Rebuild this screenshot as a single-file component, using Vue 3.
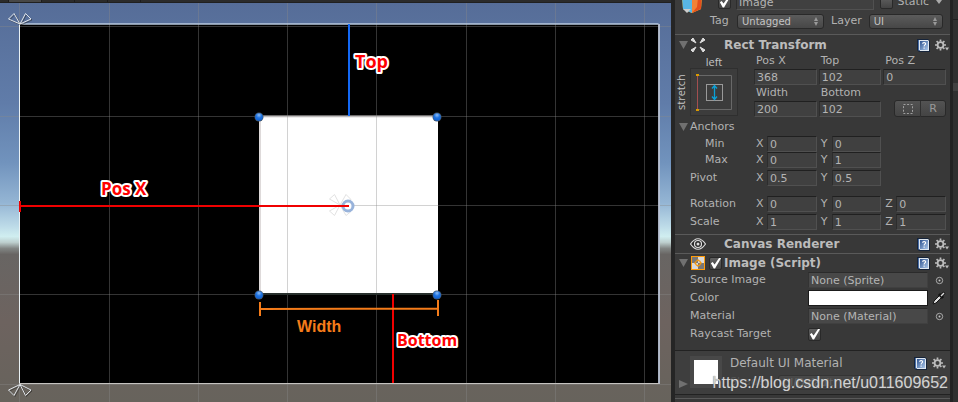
<script setup>
import { ref } from 'vue'

const name = ref('Image')
const active = ref(true)
const isStatic = ref(false)
const imageEnabled = ref(true)
const raycast = ref(true)

const verticals = [19, 109, 198, 287, 376, 466, 555, 644]
const horizontals = [26, 116, 205, 294, 384]
const handles = [[259, 117], [437, 117], [259, 295], [437, 295]]

const rectFields = [
  ['Pos X', '368'], ['Top', '102'], ['Pos Z', '0'],
  ['Width', '200'], ['Bottom', '102']
]
const vectors = [
  { label: 'Min', kind: 'nested', values: { X: '0', Y: '0' } },
  { label: 'Max', kind: 'nested', values: { X: '0', Y: '1' } },
  { label: 'Pivot', kind: 'pivot', values: { X: '0.5', Y: '0.5' } },
  { label: 'Rotation', kind: '', values: { X: '0', Y: '0', Z: '0' } },
  { label: 'Scale', kind: '', values: { X: '1', Y: '1', Z: '1' } }
]
</script>

<template>
  <svg class="symbols" aria-hidden="true">
    <defs>
      <linearGradient id="book" x1="0" y1="0" x2="1" y2="1">
        <stop offset="0" stop-color="#2f5490" /><stop offset="1" stop-color="#a9c6ea" />
      </linearGradient>
      <symbol id="help" viewBox="0 0 13 13">
        <path d="M0 0H11L13 2V13H2L0 11Z" fill="#16243a" />
        <path d="M2 1H11L12 2V12H3L2 11Z" fill="#dfe7ef" />
        <path d="M1 1H2V11L3 12H2L1 11Z" fill="#4a6fa8" />
        <path d="M3 2H11V11H3Z" fill="url(#book)" />
        <path d="M5.500 4.800C5.700 3.200 8.700 3.200 8.600 4.900C8.500 6 7.100 6 7.100 7.500M7.100 8.500V9.700" fill="none" stroke="#fff" stroke-width="1.100" />
      </symbol>
      <symbol id="gear" viewBox="0 0 14 12">
        <circle cx="5.5" cy="5.5" r="2.9" fill="none" stroke="#bdbdbd" stroke-width="1.8" />
        <path d="M5.5 0V2M5.5 9V11M0 5.5H2M9 5.5H11M1.6 1.6L3 3M8 8L9.4 9.4M9.4 1.6L8 3M1.6 9.4L3 8" stroke="#bdbdbd" stroke-width="1.7" />
        <path d="M10 8H14L12 11Z" fill="#bdbdbd" />
      </symbol>
      <symbol id="picker" viewBox="0 0 9 9">
        <circle cx="4.5" cy="4.5" r="3.2" fill="none" stroke="#aaa" /><circle cx="4.5" cy="4.5" r="1" fill="#c4c4c4" />
      </symbol>
    </defs>
  </svg>

  <main class="editor">
    <section class="scene" aria-label="Scene">
      <div class="tabs"><span></span><span class="lit"></span><span></span><span></span><span></span><span></span></div>
      <svg class="view" viewBox="0 3 671 399" preserveAspectRatio="xMinYMin slice">
        <defs>
          <linearGradient id="sky" gradientUnits="userSpaceOnUse" x1="0" y1="3" x2="0" y2="402">
            <stop offset="0" stop-color="#566d98" />
            <stop offset=".25" stop-color="#607ca9" />
            <stop offset=".4" stop-color="#7193bd" />
            <stop offset=".5" stop-color="#94b5d4" />
            <stop offset=".56" stop-color="#bddbe8" />
            <stop offset=".585" stop-color="#d0eef0" />
            <stop offset=".6" stop-color="#bdcfce" />
            <stop offset=".615" stop-color="#828684" />
            <stop offset=".63" stop-color="#686563" />
            <stop offset=".8" stop-color="#6d635f" />
            <stop offset="1" stop-color="#67635c" />
          </linearGradient>
          <radialGradient id="dot" cx=".5" cy=".25" r=".75">
            <stop offset="0" stop-color="#8dbcf5" /><stop offset=".5" stop-color="#1f73e0" /><stop offset="1" stop-color="#0e5fd2" />
          </radialGradient>
        </defs>
        <rect y="3" width="671" height="399" fill="url(#sky)" />
        <rect x="20" y="24" width="639" height="360" fill="#000" />
        <rect x="259" y="116" width="179" height="178" fill="#fff" />
        <path d="M260 116V294M259 116.5H438" stroke="#dedada" stroke-width="2" />
        <g stroke="#888" stroke-opacity=".38">
          <path v-for="x in verticals" :key="x" :d="`M${x + .5} 3V402`" />
          <path v-for="y in horizontals" :key="y" :d="`M0 ${y + .5}H671`" />
        </g>
        <path d="M19.5 24V384" stroke="#e9f1f4" />
        <path d="M19 24H658.5" stroke="#b8cadf" stroke-width="1.6" />
        <path d="M659 24V384" stroke="#bcc5d6" stroke-width="1.8" />
        <path d="M19 383.5H659" stroke="#c5c3c0" />
        <g fill="none" stroke="#222" stroke-opacity=".5" transform="translate(1 1)">
          <path d="M20 24L8.500 19L14 13.500ZM20 24L25.500 13.500L31 19Z" />
          <path d="M20 384.500L8.500 390L14 395.500ZM20 384.500L25.500 395.500L31 390Z" />
        </g>
        <g fill="none" stroke="#e0e4e8">
          <path d="M20 24L8.500 19L14 13.500ZM20 24L25.500 13.500L31 19Z" />
          <path d="M20 384.500L8.500 390L14 395.500ZM20 384.500L25.500 395.500L31 390Z" />
        </g>
        <path d="M340 205L329.500 199L334.500 194.500ZM340 205L346 194.500L351 199.500ZM340 205L329.500 211L334.500 215.500ZM340 205L346 215.500L351 211.500Z" fill="none" stroke="#e2e2e2" />
        <circle cx="348" cy="206" r="5" fill="#fff" stroke="#98b3db" stroke-width="3" />
        <path d="M259 294H438" stroke="#28302d" stroke-width="2" />
        <path d="M349 24V116" stroke="#1469f5" stroke-width="2" />
        <path d="M20 206H349M20 201V212M393 294V383" stroke="#f00000" stroke-width="2" />
        <path d="M260 309L438 308.500M260 302V316M438 300V316" stroke="#f57c1a" stroke-width="2" />
        <g v-for="([x, y]) in handles" :key="`${x}-${y}`">
          <circle :cx="x" :cy="y" r="4.500" fill="#456" />
          <circle :cx="x" :cy="y" r="3.800" fill="url(#dot)" />
        </g>
        <g class="notes">
          <text x="355" y="68" font-size="18">Top</text>
          <text x="101" y="195" font-size="17">Pos X</text>
          <text x="397" y="346" font-size="16">Bottom</text>
          <text class="size" x="297" y="332" font-size="16">Width</text>
        </g>
      </svg>
    </section>

    <aside class="inspector" aria-label="Inspector">
      <header class="object">
        <div class="identity">
          <svg class="cube" viewBox="0 0 22 22" aria-hidden="true">
            <path d="M1 5L11 1L21 5L20 18L11 22L2 18Z" fill="#f2d53c" />
            <path d="M1 5L11 9V22L2 18Z" fill="#58b6e5" />
            <path d="M11 9L21 5L20 18L11 22Z" fill="#e54f1d" />
            <path d="M11 9L17 7L16 16L11 22Z" fill="#f38236" />
            <path d="M2 18H10L6 22Z" fill="#ccc" />
          </svg>
          <input v-model="active" class="check" type="checkbox" aria-label="Active">
          <input v-model="name" class="field name" aria-label="Name">
          <label class="static"><input v-model="isStatic" class="check" type="checkbox">Static</label>
          <span class="drop"></span>
        </div>
        <div class="tags">
          <label for="tag">Tag</label>
          <span class="select tag"><select id="tag"><option>Untagged</option></select></span>
          <label for="layer">Layer</label>
          <span class="select layer"><select id="layer"><option>UI</option></select></span>
        </div>
      </header>

      <section class="component">
        <div class="title tall">
          <span class="fold"></span>
          <svg class="icon" viewBox="0 0 16 16" aria-hidden="true">
            <path d="M1 3L3 1L6 6ZM15 3L13 1L10 6ZM1 13L3 15L6 10ZM15 13L13 15L10 10Z" fill="#ddd" stroke="#ddd" />
          </svg>
          <h2>Rect Transform</h2>
          <button class="tool" aria-label="Help"><svg><use href="#help" /></svg></button>
          <button class="tool wide" aria-label="Settings"><svg><use href="#gear" /></svg></button>
        </div>
        <div class="rect">
          <div class="anchor">
            <span class="across">left</span>
            <span class="along">stretch</span>
            <button class="preset" aria-label="Anchor presets">
              <svg viewBox="0 0 48 48">
                <path d="M7 7.500H41.500V41.500H7" fill="none" stroke="#686868" />
                <path d="M7.500 7V42" stroke="#a34f50" />
                <rect x="16.500" y="16.500" width="16" height="16" fill="none" stroke="#999" />
                <path d="M24.500 18V31M22 20.500L24.500 17.500L27 20.500M22 28.500L24.500 31.500L27 28.500" fill="none" stroke="#0aa1d8" stroke-width="1.300" />
                <path d="M6 6H9V8H6ZM6 41H9V43H6Z" fill="#d99a00" />
              </svg>
            </button>
          </div>
          <div class="columns">
            <label v-for="[label, value] in rectFields" :key="label" class="stacked">
              <span>{{ label }}</span><input class="field" :value="value">
            </label>
            <div class="modes">
              <button aria-label="Blueprint mode"><svg viewBox="0 0 12 12"><rect x="1.500" y="1.500" width="9" height="9" fill="none" stroke="#a0a0a0" stroke-dasharray="2 1.600" /></svg></button>
              <button>R</button>
            </div>
          </div>
        </div>
        <div class="anchors"><span class="fold"></span>Anchors</div>
        <div v-for="row in vectors" :key="row.label" class="vector" :class="row.kind">
          <span>{{ row.label }}</span>
          <div class="columns">
            <label v-for="(value, axis) in row.values" :key="axis">
              <span>{{ axis }}</span><input class="field" :value="value">
            </label>
          </div>
        </div>
      </section>

      <section class="component">
        <div class="title">
          <span class="fold none"></span>
          <svg class="icon" viewBox="0 0 16 16" aria-hidden="true">
            <path d="M.5 8Q8-2.500 15.500 8Q8 18.500 .5 8Z" fill="#292929" stroke="#ddd" stroke-width="1.200" />
            <circle cx="8" cy="8" r="3.500" fill="none" stroke="#ddd" stroke-width="1.200" /><circle cx="8" cy="8" r="1.500" fill="#ddd" />
          </svg>
          <h2>Canvas Renderer</h2>
          <button class="tool" aria-label="Help"><svg><use href="#help" /></svg></button>
          <button class="tool wide" aria-label="Settings"><svg><use href="#gear" /></svg></button>
        </div>
      </section>

      <section class="component image">
        <div class="title">
          <span class="fold"></span>
          <svg class="icon sprite" viewBox="0 0 14 14" aria-hidden="true">
            <rect width="14" height="14" fill="#777" /><path d="M7 0H14V7H7ZM0 7H7V14H0Z" fill="#d9d9d9" />
            <rect x=".5" y=".5" width="13" height="13" fill="none" stroke="#ff9c0a" />
            <circle cx="7" cy="7" r="2.500" fill="none" stroke="#f29811" stroke-width="1.200" />
            <path d="M3 7H5M9 7H11M7 3V5M7 9V11" stroke="#f29811" />
          </svg>
          <input v-model="imageEnabled" class="check" type="checkbox" aria-label="Image enabled">
          <h2>Image (Script)</h2>
          <button class="tool" aria-label="Help"><svg><use href="#help" /></svg></button>
          <button class="tool wide" aria-label="Settings"><svg><use href="#gear" /></svg></button>
        </div>
        <div class="properties">
          <div class="property">
            <label for="source">Source Image</label><input id="source" class="field object-field" value="None (Sprite)" readonly>
            <button class="pick" aria-label="Select sprite"><svg><use href="#picker" /></svg></button>
          </div>
          <div class="property">
            <label for="color">Color</label><button id="color" class="swatch"></button>
            <button class="pick" aria-label="Pick color">
              <svg class="dropper" viewBox="0 0 14 14">
                <path d="M1 13L2 10L8 4L10 6L4 12Z" fill="#ddd" stroke="#151515" /><path d="M7 3L11 7M9 5L12.500 1.500" stroke="#111" stroke-width="3" /><path d="M9 5L12 2" stroke="#ddd" stroke-width="1.500" />
              </svg>
            </button>
          </div>
          <div class="property">
            <label for="material">Material</label><input id="material" class="field object-field" value="None (Material)" readonly>
            <button class="pick" aria-label="Select material"><svg><use href="#picker" /></svg></button>
          </div>
          <div class="property">
            <label for="raycast">Raycast Target</label><input id="raycast" v-model="raycast" class="check" type="checkbox">
          </div>
        </div>
      </section>

      <section class="material">
        <span class="fold closed"></span>
        <div class="thumb"></div>
        <div class="details">
          <div class="heading">
            <h3>Default UI Material</h3>
            <button class="tool" aria-label="Help"><svg><use href="#help" /></svg></button>
            <button class="tool wide" aria-label="Settings"><svg><use href="#gear" /></svg></button>
          </div>
          <div class="shader">
            <label for="shader">Shader</label>
            <span class="select"><select id="shader" disabled><option>UI/Default</option></select></span>
          </div>
        </div>
      </section>
      <footer></footer>
    </aside>
    <div class="edge"><span></span><span></span><span></span></div>
    <p class="watermark">https://blog.csdn.net/u011609652</p>
  </main>
</template>

<style>
body { margin: 0; background: #383838; overflow: hidden; }
</style>

<style scoped>
* { box-sizing: border-box; }
.symbols { position: absolute; width: 0; height: 0; }
.editor {
  position: relative;
  display: flex;
  min-height: 100vh;
  font: 11px/16px "DejaVu Sans", sans-serif;
  color: #b2b2b2;
  background: #383838;
}
button, input, select { margin: 0; padding: 0; border: 0; font: inherit; color: inherit; background: none; }
h2, h3, p { margin: 0; }
button { display: flex; align-items: center; justify-content: center; }

.scene { flex: 1; min-width: 0; display: flex; flex-direction: column; background: #67635c; }
.tabs { display: flex; gap: 1px; height: 3px; background: #1c1c1c; border-bottom: 1px solid #202020; }
.tabs span { width: 32px; background: #2b2b2b; }
.tabs span:first-child { width: 8px; }
.tabs span:last-child { flex: 1; }
.tabs .lit { background: #474747; }
.view { display: block; width: 100%; flex: 1; }
.notes { font-family: "Open Sans", sans-serif; font-weight: 700; fill: #f00; stroke: #fff; stroke-width: 4px; stroke-linejoin: round; paint-order: stroke; }
.notes .size { font-family: "Liberation Sans", sans-serif; fill: #f57c1a; stroke: none; }

.inspector {
  flex: 0 0 279px;
  display: flex;
  flex-direction: column;
  border-left: 4px solid #252525;
  background: #383838;
}
.edge { flex: 0 0 8px; display: flex; flex-direction: column; background: #303030; border-left: 3px solid #232323; }
.edge span { height: 20px; border-bottom: 1px solid #202020; }
.edge span:nth-child(2) { height: 63px; border: 0; }
.edge span:nth-child(3) { height: 8px; background: #414141; border: 0; }

.object { display: flex; flex-direction: column; justify-content: flex-end; height: 34px; padding-bottom: 3px; overflow: hidden; background: #3c3c3c; }
.identity { display: flex; align-items: center; flex: none; height: 18px; padding: 0 8px 0 6px; }
.cube { width: 22px; height: 22px; margin: 0 15px 0 0; flex: none; }
.name { flex: 1; min-width: 0; margin: 0 6px 0 5px; }
.static { display: flex; align-items: center; gap: 5px; }
.drop { border: 3px solid transparent; border-top: 4px solid #aaa; border-bottom: 0; margin-left: 7px; }
.tags { display: flex; align-items: center; flex: none; height: 20px; padding: 0 7px 0 35px; }
.tags label:first-child { width: 27px; }
.tags .tag { flex: 86; margin-right: 7px; }
.tags .layer { flex: 73; margin-left: 7px; }
.select { position: relative; display: flex; height: 15px; border: 1px solid #292929; border-radius: 3px; background: linear-gradient(#5b5b5b, #474747); }
.select select { appearance: none; flex: 1; width: 100%; padding-left: 4px; font-size: 10px; line-height: 13px; color: #c4c4c4; }
.select::before, .select::after { content: ""; position: absolute; right: 5px; border: 2px solid transparent; }
.select::before { top: 2px; border-top: 0; border-bottom: 4px solid #999; }
.select::after { bottom: 2px; border-bottom: 0; border-top: 4px solid #999; }

.component { border-top: 1px solid #5a5a5a; }
.title { display: flex; align-items: center; height: 18px; padding-right: 1px; }
.title.tall { height: 20px; }
h2 { flex: 1; font-size: 12px; line-height: 18px; font-weight: 700; color: #bcbcbc; white-space: nowrap; }
.fold { flex: none; width: 9px; height: 8px; margin: 0 2px 0 4px; background: #707070; clip-path: polygon(0 0, 100% 0, 50% 100%); }
.fold.none { visibility: hidden; }
.fold.closed { clip-path: polygon(0 0, 100% 50%, 0 100%); }
.icon { flex: none; width: 16px; height: 16px; margin-right: 18px; }
.icon.sprite { width: 14px; height: 14px; margin: 0 4px 0 1px; }
.title .check { margin-right: 2px; }
.tool { flex: none; width: 13px; height: 13px; margin-right: 5px; }
.tool svg { width: 100%; height: 100%; }
.tool.wide { width: 14px; margin-right: 0; }

.field {
  display: block;
  width: 100%;
  min-width: 0;
  height: 16px;
  padding: 0 2px;
  line-height: 14px;
  color: #b4b4b4;
  background: #404040;
  border: 1px solid #505050;
  border-top-color: #202020;
  border-left-color: #2d2d2d;
}
.rect { display: grid; grid-template-columns: 79px 1fr; padding-right: 4px; }
.anchor { display: grid; grid-template: 13px 48px / 11px 48px; column-gap: 4px; font: 11px/13px "Open Sans", sans-serif; color: #c4c4c4; }
.across { grid-column: 2; text-align: center; }
.along { writing-mode: vertical-rl; transform: rotate(180deg); text-align: center; line-height: 11px; }
.preset { background: #3c3c3c; border: 1px solid #2f2f2f; }
.preset svg { flex: none; width: 48px; height: 48px; }
.columns { display: grid; grid-template-columns: repeat(3, 1fr); column-gap: 2px; }
.stacked > span { display: block; padding-left: 2px; }
.rect .columns { margin-top: -2px; }
.modes { display: grid; grid-template-columns: 1fr 1fr; align-self: end; height: 17px; margin-left: 11px; border: 1px solid #292929; border-radius: 3px; background: linear-gradient(#535353, #444); color: #999; }
.modes button + button { border-left: 1px solid #303030; }
.modes svg { width: 12px; height: 12px; }
.anchors { display: flex; align-items: center; height: 18px; margin-top: 1px; }
.vector { display: grid; grid-template-columns: 64px 1fr; align-items: center; height: 18px; padding: 0 4px 0 15px; }
.vector.nested { height: 16px; }
.vector.nested > span { padding-left: 15px; }
.vector.pivot { margin: 1px 0 8px; }
.vector label { display: grid; grid-template-columns: 11px 1fr; padding-left: 2px; align-items: center; }
.vector:last-child { margin-bottom: 3px; }

.properties { margin-top: -1px; padding-bottom: 7px; }
.property { display: grid; grid-template-columns: 118px 1fr 22px; align-items: center; height: 18px; padding-left: 15px; }
.property label { line-height: 14px; }
.object-field { background: #484848; border-color: #2b2b2b #404040 #404040 #333; }
.swatch { height: 16px; background: #fff; border: 1px solid #1b1b1b; }
.pick svg { width: 9px; height: 9px; }
.pick .dropper { width: 14px; height: 14px; }
.check {
  appearance: none;
  flex: none;
  width: 13px;
  height: 13px;
  border: 1px solid #292929;
  border-radius: 2px;
  background: linear-gradient(#606060, #444);
}
.check:checked::after { content: ""; display: block; width: 11px; height: 11px; background: #fff; clip-path: polygon(8% 52%, 24% 42%, 42% 64%, 85% 0, 100% 6%, 46% 100%, 34% 100%); }

.material { display: flex; height: 44px; padding: 5px 4px 0 0; background: #3e3e3e; border-top: 1px solid #222; }
.material > .fold { align-self: flex-end; margin-bottom: 6px; }
.thumb { flex: none; width: 32px; height: 32px; border: 4px solid #484848; background: #fff; }
.details { flex: 1; min-width: 0; padding-left: 8px; }
.heading { display: flex; align-items: center; height: 15px; }
h3 { flex: 1; font-size: 12px; line-height: 15px; font-weight: 400; white-space: nowrap; }
.shader { display: grid; grid-template-columns: 48px 1fr; align-items: center; height: 22px; color: #777; opacity: .4; }
footer { height: 5px; border-top: 1px solid #222; border-bottom: 1px solid #5a5a5a; }
.watermark { position: absolute; right: 10px; bottom: 9px; font: 16px/20px "Liberation Sans", sans-serif; color: #d2d2d2; text-shadow: 0 0 1px #555; }
</style>
